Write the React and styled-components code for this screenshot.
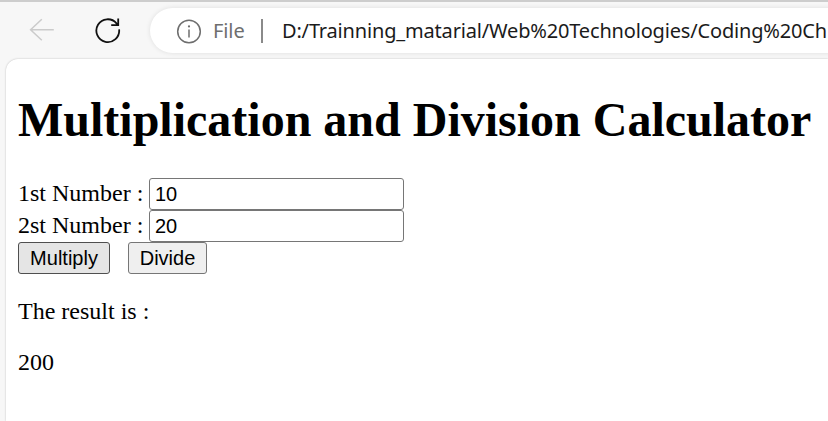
import React, { useState } from "react";
import styled, { createGlobalStyle } from "styled-components";

const GlobalStyle = createGlobalStyle`
  * { box-sizing: border-box; }
  body { margin: 0; background: #f7f7f7; overflow: hidden; }
`;

const Browser = styled.div`
  width: 828px;
  height: 421px;
  display: flex;
  flex-direction: column;
  overflow: hidden;
  background: #f7f7f7;
  border-top: 2px solid #cdcdcd;
`;

const Toolbar = styled.header`
  flex: none;
  height: 57px;
  display: flex;
  align-items: flex-start;
  padding: 6px 0 0 29px;
`;

const NavIcon = styled.svg`
  flex: none;
  width: 26px;
  height: 26px;
  margin: 9px ${(p) => p.$gap}px 0 0;
  fill: none;
  stroke: ${(p) => p.$color};
  stroke-width: ${(p) => p.$weight};
`;

const AddressBar = styled.div`
  flex: none;
  width: 720px;
  height: 45px;
  display: flex;
  align-items: center;
  padding-left: 26px;
  border-radius: 23px;
  background: #fff;
  box-shadow: 0 0 5px rgba(0, 0, 0, 0.1);
  font-family: "Noto Sans", sans-serif;
  white-space: nowrap;
`;

const InfoIcon = styled.svg`
  flex: none;
  width: 26px;
  height: 26px;
  fill: none;
  stroke: #6e6e6e;
  stroke-width: 1.5;
`;

const Scheme = styled.span`
  width: 48px;
  margin-left: 11px;
  font-size: 20px;
  letter-spacing: -0.1px;
  color: #6e6e6e;
`;

const Divider = styled.span`
  flex: none;
  width: 2px;
  height: 24px;
  background: #8a8a8a;
  margin-right: 19px;
`;

const Url = styled.span`
  font-size: 20px;
  line-height: 27px;
  letter-spacing: -0.17px;
  color: #1b1b1b;
`;

const Page = styled.main`
  flex: 1;
  margin-left: 6px;
  padding: 33px 0 0 12px;
  background: #fff;
  border-radius: 12px 0 0 0;
  box-shadow: 0 0 2px rgba(0, 0, 0, 0.25);
  font: 24px/27px "Liberation Serif", serif;
  color: #000;
`;

const Title = styled.h1`
  margin: 0 0 31px;
  font-size: 48px;
  line-height: 55px;
  white-space: nowrap;
`;

const Field = styled.label`
  display: flex;
  height: 32px;
  align-items: center;
  white-space: pre;
`;

const FieldName = styled.span`
  width: 131px;
  padding-bottom: 2px;
`;

const NumberInput = styled.input`
  width: 255px;
  height: 32px;
  padding: 0 5px;
  border: 1px solid #767676;
  border-radius: 3px;
  background: #fff;
  font: 20px "Liberation Sans", sans-serif;
  color: #000;
  outline: none;
`;

const Actions = styled.div`
  display: flex;
  gap: 18px;
`;

const ActionButton = styled.button`
  width: ${(p) => p.$width}px;
  height: 32px;
  padding: 0;
  border: 1px solid ${(p) => (p.$active ? "#4f4f4f" : "#767676")};
  border-radius: 3px;
  background: ${(p) => (p.$active ? "#e5e5e5" : "#efefef")};
  font: 20px "Liberation Sans", sans-serif;
  color: #000;
`;

const Result = styled.p`
  margin: 24px 0 0;
`;

export default function App() {
  const [first, setFirst] = useState("10");
  const [second, setSecond] = useState("20");
  const [result, setResult] = useState(200);

  return (
    <>
      <GlobalStyle />
      <Browser>
        <Toolbar>
          <NavIcon viewBox="0 0 26 26" $gap={40} $color="#cbcbcb" $weight={1.5}>
            <path d="M24.8 12.8H1.6M12.8 2.2L1.6 12.8L12.8 23.2" />
          </NavIcon>
          <NavIcon viewBox="0 0 26 26" $gap={29} $color="#111" $weight={1.8}>
            <path d="M24.1 12.3A11.4 11.4 0 1 1 21.5 6.3L23.2 8.1M23.2 1.4V8.2H16.2" />
          </NavIcon>
          <AddressBar>
            <InfoIcon viewBox="0 0 26 26">
              <circle cx="13" cy="13.5" r="11.3" />
              <path d="M13 11.5V19.5" />
              <circle cx="13" cy="8.4" r="1.1" fill="#6e6e6e" stroke="none" />
            </InfoIcon>
            <Scheme>File</Scheme>
            <Divider />
            <Url>D:/Trainning_matarial/Web%20Technologies/Coding%20Ch</Url>
          </AddressBar>
        </Toolbar>
        <Page>
          <Title>Multiplication and Division Calculator</Title>
          <Field>
            <FieldName>1st Number : </FieldName>
            <NumberInput value={first} onChange={(e) => setFirst(e.target.value)} />
          </Field>
          <Field>
            <FieldName>2st Number : </FieldName>
            <NumberInput value={second} onChange={(e) => setSecond(e.target.value)} />
          </Field>
          <Actions>
            <ActionButton $width={92} $active onClick={() => setResult(first * second)}>
              Multiply
            </ActionButton>
            <ActionButton $width={79} onClick={() => setResult(first / second)}>
              Divide
            </ActionButton>
          </Actions>
          <Result>The result is :</Result>
          <Result>{result}</Result>
        </Page>
      </Browser>
    </>
  );
}
